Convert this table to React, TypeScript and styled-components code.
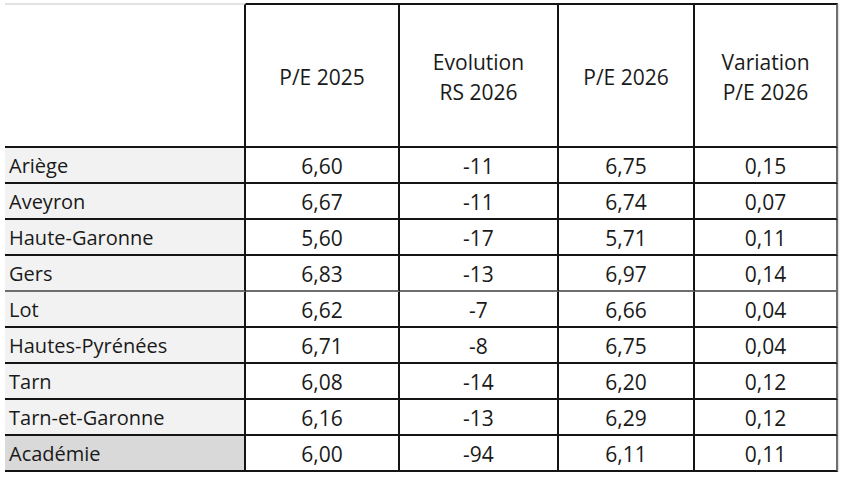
import * as React from 'react';
import styled, { createGlobalStyle } from 'styled-components';

const GlobalStyle = createGlobalStyle`
	html, body {
		margin: 0;
		padding: 0;
		background: #ffffff;
	}
	body {
		font-family: 'Open Sans', 'Noto Sans', sans-serif;
		color: #1a1a1a;
	}
`;

type Row = {
	name: string;
	pe2025: string;
	evolution: string;
	pe2026: string;
	variation: string;
};

const rows: Row[] = [
	{ name: 'Ariège', pe2025: '6,60', evolution: '-11', pe2026: '6,75', variation: '0,15' },
	{ name: 'Aveyron', pe2025: '6,67', evolution: '-11', pe2026: '6,74', variation: '0,07' },
	{ name: 'Haute-Garonne', pe2025: '5,60', evolution: '-17', pe2026: '5,71', variation: '0,11' },
	{ name: 'Gers', pe2025: '6,83', evolution: '-13', pe2026: '6,97', variation: '0,14' },
	{ name: 'Lot', pe2025: '6,62', evolution: '-7', pe2026: '6,66', variation: '0,04' },
	{ name: 'Hautes-Pyrénées', pe2025: '6,71', evolution: '-8', pe2026: '6,75', variation: '0,04' },
	{ name: 'Tarn', pe2025: '6,08', evolution: '-14', pe2026: '6,20', variation: '0,12' },
	{ name: 'Tarn-et-Garonne', pe2025: '6,16', evolution: '-13', pe2026: '6,29', variation: '0,12' },
	{ name: 'Académie', pe2025: '6,00', evolution: '-94', pe2026: '6,11', variation: '0,11' },
];

// lignes plus claires dans la capture
const softRows = ['Gers'];

const App: React.FC = () => {
	return (
		<>
			<GlobalStyle />
			<Page>
				<Grid>
					<CornerCell />
					<HeadCell>P/E 2025</HeadCell>
					<HeadCell>
						Evolution
						<br />
						RS 2026
					</HeadCell>
					<HeadCell>P/E 2026</HeadCell>
					<HeadCell $soft>
						Variation
						<br />
						P/E 2026
					</HeadCell>
					{rows.map((r) => {
						const soft = softRows.includes(r.name);
						const total = r.name === 'Académie';
						return (
							<React.Fragment key={r.name}>
								<NameCell $total={total} $softBottom={soft}>
									{r.name}
								</NameCell>
								<ValueCell $softBottom={soft}>{r.pe2025}</ValueCell>
								<ValueCell $softBottom={soft}>{r.evolution}</ValueCell>
								<ValueCell $softBottom={soft}>{r.pe2026}</ValueCell>
								<ValueCell $soft $softBottom={soft}>
									{r.variation}
								</ValueCell>
							</React.Fragment>
						);
					})}
				</Grid>
			</Page>
		</>
	);
};

const Page = styled.div`
	padding: 3px 0 0 5px;
`;

const Grid = styled.div`
	display: grid;
	grid-template-columns: 241px 154px 159px 136px 143px;
	grid-template-rows: 145px repeat(9, 36px);
	width: 833px;
	box-shadow: 1px 1px 1px rgba(0, 0, 0, 0.12);
`;

const BaseCell = styled.div<{ $soft?: boolean; $softBottom?: boolean }>`
	box-sizing: border-box;
	border-right: 2px solid ${(p) => (p.$soft ? '#6e6e6e' : '#141414')};
	border-bottom: 2px solid ${(p) => (p.$softBottom ? '#6e6e6e' : '#141414')};
	font-size: 21px;
	color: #1a1a1a;
	display: flex;
	align-items: center;
	white-space: nowrap;
`;

const CornerCell = styled(BaseCell)`
	border-top: 2px solid #e2e2e2;
	background: #ffffff;
`;

const HeadCell = styled(BaseCell)`
	border-top: 2px solid #141414;
	justify-content: center;
	text-align: center;
	line-height: 30px;
	padding-top: 3px;
`;

const NameCell = styled(BaseCell)<{ $total?: boolean }>`
	background: ${(p) => (p.$total ? '#d9d9d9' : '#f2f2f2')};
	font-size: 20px;
	padding: 1px 0 0 4px;
	justify-content: flex-start;
`;

const ValueCell = styled(BaseCell)`
	justify-content: center;
	padding-top: 1px;
`;

export default App;
